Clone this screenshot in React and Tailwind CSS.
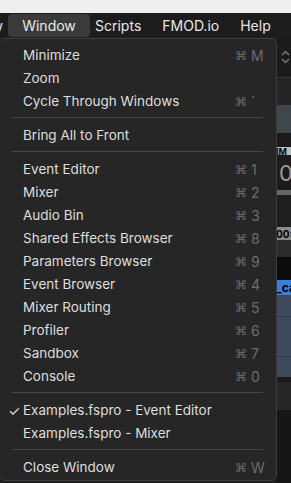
import React from 'react';

const font = { fontFamily: 'Inter, "DejaVu Sans", sans-serif' };

const groups = [
  [
    { label: 'Minimize', key: 'M' },
    { label: 'Zoom' },
    { label: 'Cycle Through Windows', key: '`' },
  ],
  [{ label: 'Bring All to Front' }],
  [
    { label: 'Event Editor', key: '1' },
    { label: 'Mixer', key: '2' },
    { label: 'Audio Bin', key: '3' },
    { label: 'Shared Effects Browser', key: '8' },
    { label: 'Parameters Browser', key: '9' },
    { label: 'Event Browser', key: '4' },
    { label: 'Mixer Routing', key: '5' },
    { label: 'Profiler', key: '6' },
    { label: 'Sandbox', key: '7' },
    { label: 'Console', key: '0' },
  ],
  [
    { label: 'Examples.fspro - Event Editor', checked: true },
    { label: 'Examples.fspro - Mixer' },
  ],
  [{ label: 'Close Window', key: 'W' }],
];

function MenuRow({ item }) {
  return (
    <div className="flex h-[23px] items-center pl-[8px] pr-[13px] pt-[2px] text-[13.5px] text-[#dedede]">
      <span className="w-[15px] text-[14px] leading-none">{item.checked ? '✓' : ''}</span>
      <span className="flex-1 whitespace-nowrap">{item.label}</span>
      <span className="flex w-[28px] items-center gap-[4px] text-[14px] text-[#6c6c6c]">
        {item.key && (
          <>
            <span className="text-[12px]" style={{ fontFamily: '"DejaVu Sans", sans-serif' }}>⌘</span>
            <span>{item.key}</span>
          </>
        )}
      </span>
    </div>
  );
}

function Separator() {
  return (
    <div className="flex h-[11px] items-center pl-[12px] pr-[13px]">
      <div className="h-px w-full bg-[#444444]" />
    </div>
  );
}

// the app window peeking out to the right of the menu
function BackdropStrip() {
  return (
    <div className="flex w-[15px] flex-col overflow-hidden">
      <div className="flex h-[40px] items-center justify-end bg-[#1b1b1b] pr-[1px]">
        <svg width="9" height="14" viewBox="0 0 9 14" fill="none" stroke="#767676" strokeWidth="1.5">
          <path d="M1 5 L4.5 1.5 L8 5" />
          <path d="M1 9 L4.5 12.5 L8 9" />
        </svg>
      </div>
      <div className="h-px bg-[#3a3a3a]" />
      <div className="h-[27px] bg-[#252525]" />
      <div className="h-[28px] bg-[#40474b]" />
      <div className="h-[14px] bg-[#1a1a1a]" />
      <div className="flex h-[8px] items-center bg-[#bcbcbc] text-[9px] font-bold leading-none text-black">IM</div>
      <div className="flex h-[35px] items-center bg-[#1c1c1c] pl-[3px] text-[22px] leading-none text-[#9a9a9a]">0</div>
      <div className="h-[5px] bg-[#666666]" />
      <div className="h-[32px] bg-[#1e1e1e]" />
      <div className="flex h-[13px] items-center bg-[#8a8a8a] text-[10px] font-bold leading-none text-black">00:</div>
      <div className="h-[17px] bg-[#2c2c2c]" />
      <div className="h-[23px] bg-[#0c0c0c]" />
      <div className="flex h-[15px] items-center bg-[#3a7fdc] text-[12px] font-bold leading-none text-black">_ca</div>
      <div className="h-[22px] border-b border-[#2e3746] bg-[#3e4a5c]" />
      <div className="h-[40px] border-b border-[#2e3746] bg-[#3e4a5c]" />
      <div className="h-[20px] bg-[#3e4a5c]" />
      <div className="h-[5px] bg-[#1a1a1a]" />
      <div className="h-[28px] bg-[#262626]" />
      <div className="flex-1 bg-[#161616]" />
    </div>
  );
}

export default function App() {
  return (
    <div className="relative flex h-[483px] w-[291px] flex-col overflow-hidden bg-[#161616]" style={font}>
      <div className="h-[13px] bg-[#efefef]" />
      <div className="flex h-[24px] items-center bg-[#1c1c1c] text-[14px] text-[#e8e8e8]">
        <span className="flex w-[8px] justify-end overflow-hidden">
          <span className="pr-[5px]">w</span>
        </span>
        <span className="flex h-[23px] w-[82px] items-center justify-center rounded-[4px] bg-[#3a3a3a]">Window</span>
        <span className="ml-[5px]">Scripts</span>
        <span className="ml-[21px]">FMOD.io</span>
        <span className="ml-[21px]">Help</span>
      </div>
      <div className="flex flex-1">
        <div className="flex-1 bg-[#1f1f1f]" />
        <BackdropStrip />
      </div>

      <div className="absolute left-[-1px] top-[38px] w-[278px] rounded-[6px] border border-[#3d3d3d] bg-[#262626] pb-[2px] pt-[4px]">
        {groups.map((group, gi) => (
          <React.Fragment key={gi}>
            {gi > 0 && <Separator />}
            {group.map((item) => (
              <MenuRow key={item.label} item={item} />
            ))}
          </React.Fragment>
        ))}
      </div>
    </div>
  );
}
